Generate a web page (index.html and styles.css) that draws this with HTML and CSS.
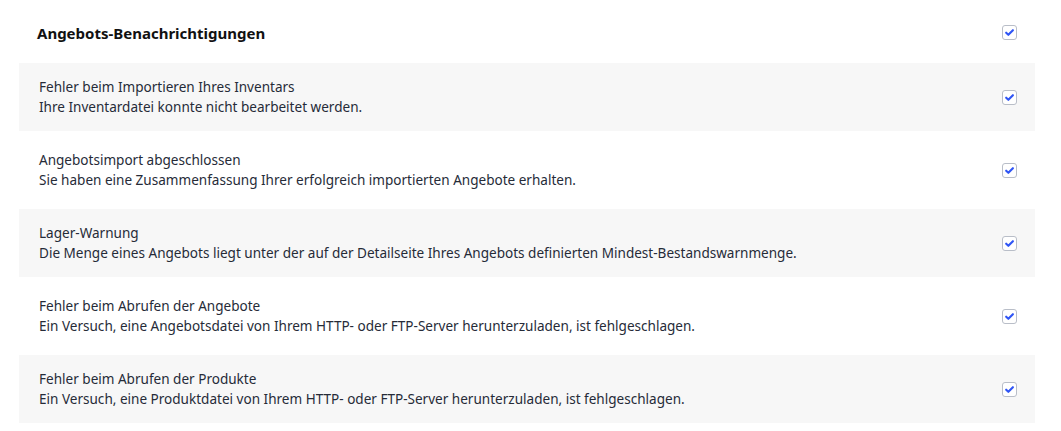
FILE: index.html
```html
<!DOCTYPE html>
<html lang="de">
<head>
    <meta charset="UTF-8">
    <meta name="viewport" content="width=device-width, initial-scale=1.0">
    <title>Angebots-Benachrichtigungen</title>
    <link rel="stylesheet" href="styles.css">
</head>
<body>
    <div class="panel">
        <div class="head">
            <h2>Angebots-Benachrichtigungen</h2>
            <span class="check"><svg viewBox="0 0 16 16"><path d="M3.9 8.3l2.7 2.6 5.6-5.7"/></svg></span>
        </div>

        <div class="row grey">
            <div class="text">
                <div>Fehler beim Importieren Ihres Inventars</div>
                <div>Ihre Inventardatei konnte nicht bearbeitet werden.</div>
            </div>
            <span class="check"><svg viewBox="0 0 16 16"><path d="M3.9 8.3l2.7 2.6 5.6-5.7"/></svg></span>
        </div>

        <div class="row">
            <div class="text">
                <div>Angebotsimport abgeschlossen</div>
                <div>Sie haben eine Zusammenfassung Ihrer erfolgreich importierten Angebote erhalten.</div>
            </div>
            <span class="check"><svg viewBox="0 0 16 16"><path d="M3.9 8.3l2.7 2.6 5.6-5.7"/></svg></span>
        </div>

        <div class="row grey">
            <div class="text">
                <div>Lager-Warnung</div>
                <div>Die Menge eines Angebots liegt unter der auf der Detailseite Ihres Angebots definierten Mindest-Bestandswarnmenge.</div>
            </div>
            <span class="check"><svg viewBox="0 0 16 16"><path d="M3.9 8.3l2.7 2.6 5.6-5.7"/></svg></span>
        </div>

        <div class="row">
            <div class="text">
                <div>Fehler beim Abrufen der Angebote</div>
                <div>Ein Versuch, eine Angebotsdatei von Ihrem HTTP- oder FTP-Server herunterzuladen, ist fehlgeschlagen.</div>
            </div>
            <span class="check"><svg viewBox="0 0 16 16"><path d="M3.9 8.3l2.7 2.6 5.6-5.7"/></svg></span>
        </div>

        <div class="row grey">
            <div class="text">
                <div>Fehler beim Abrufen der Produkte</div>
                <div>Ein Versuch, eine Produktdatei von Ihrem HTTP- oder FTP-Server herunterzuladen, ist fehlgeschlagen.</div>
            </div>
            <span class="check"><svg viewBox="0 0 16 16"><path d="M3.9 8.3l2.7 2.6 5.6-5.7"/></svg></span>
        </div>
    </div>
</body>
</html>
```
FILE: styles.css
```css
body { margin: 0; background: #fff; font-family: "Noto Sans", Arial, sans-serif; color: #262b38; }
.panel { width: 1016px; padding: 0 0 0 19px; display: flex; flex-direction: column; gap: 5px; }
.head { height: 58px; box-sizing: border-box; padding: 7px 18px 0 18px; display: flex; align-items: center; justify-content: space-between; }
.head h2 { margin: 0; font-size: 15px; font-weight: 700; color: #111; }
.row { height: 68px; box-sizing: border-box; padding: 0 18px 0 20px; display: flex; align-items: center; justify-content: space-between; }
.row.grey { background: #f7f7f7; }
.text { font-size: 13.55px; line-height: 20px; }
.check { width: 15px; height: 15px; box-sizing: border-box; border: 1px solid #b9bec8; border-radius: 3px; background: #fff; display: flex; }
.check svg { width: 100%; height: 100%; }
.check path { fill: none; stroke: #2f55f5; stroke-width: 2.6; stroke-linecap: round; stroke-linejoin: round; }
```
